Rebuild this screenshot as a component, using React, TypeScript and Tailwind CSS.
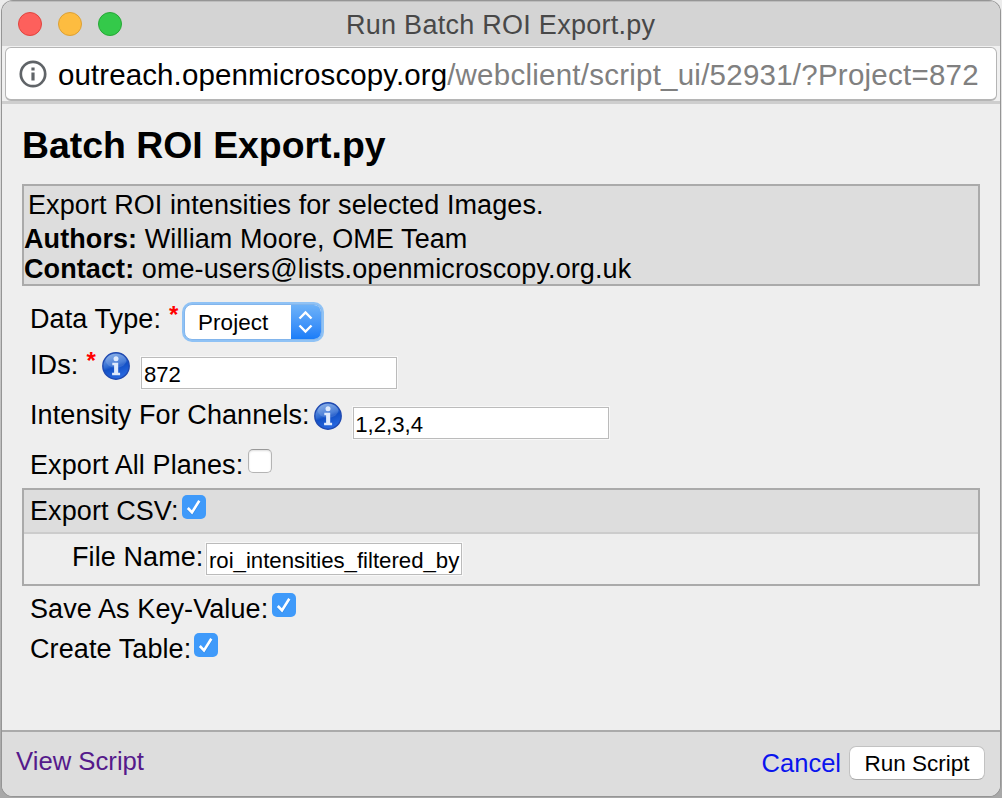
import React from "react";

function InfoIcon({ id, className }: { id: string; className: string }) {
  return (
    <svg viewBox="0 0 28 28" className={`h-7 w-7 shrink-0 ${className}`}>
      <defs>
        <linearGradient id={id} x1="0.25" y1="0" x2="0.6" y2="1">
          <stop offset="0" stopColor="#7fa9e6" />
          <stop offset="0.45" stopColor="#2f6bd2" />
          <stop offset="0.55" stopColor="#1250c6" />
          <stop offset="1" stopColor="#2b6be2" />
        </linearGradient>
      </defs>
      <circle cx="14" cy="14" r="13.2" fill={`url(#${id})`} stroke="#1f49b0" strokeWidth="1.4" />
      <ellipse cx="14" cy="8.8" rx="10.3" ry="7" fill="#ffffff" opacity="0.14" />
      <circle cx="14" cy="6.8" r="2.5" fill="#dfeafc" />
      <path d="M10.3 10.8h5.9v10h1.9v2.5h-8v-2.5h2v-7.5h-1.8z" fill="#dfeafc" />
    </svg>
  );
}

function Checkbox({ checked = false, className }: { checked?: boolean; className: string }) {
  if (!checked) {
    return (
      <span
        className={`block h-6 w-6 shrink-0 rounded-[5px] border border-[#b4b4b4] border-t-[#999] bg-white shadow-[inset_0_1px_2px_#ddd] ${className}`}
      />
    );
  }
  return (
    <span className={`block h-6 w-6 shrink-0 rounded-[5px] bg-[#3f9afa] ${className}`}>
      <svg viewBox="0 0 24 24" className="h-6 w-6" fill="none">
        <path d="M6 14.1l4.3 4.2L17.3 6.6" stroke="#2278d8" strokeWidth="2.6" opacity="0.5" />
        <path d="M5.8 13l4.2 4.4L17.3 5.8" stroke="#fff" strokeWidth="2.6" />
      </svg>
    </span>
  );
}

function TextBox({ value, className }: { value: string; className: string }) {
  return (
    <div
      className={`h-8 w-64 shrink-0 border border-[#bbb] bg-white pl-[1.5px] text-[22.2px] leading-[33px] tracking-normal whitespace-nowrap shadow-[0_0_0_1px_#f8f8f8] ${className}`}
    >
      {value}
    </div>
  );
}

function Required({ className }: { className: string }) {
  return <span className={`-mt-[3px] w-[11px] text-[24px] font-bold leading-[28px] tracking-normal text-[#f00] ${className}`}>*</span>;
}

export default function App() {
  return (
    <div className="h-[798px] w-[1002px] overflow-hidden bg-gradient-to-b from-[#ececec] via-[#c2c2c2] to-[#a8a8a8] px-[2px] pt-px font-['Liberation_Sans',Arial,sans-serif] text-[27px] leading-[30px] tracking-[0.09px] text-black">
      <div className="flex h-[795px] w-[998px] flex-col overflow-hidden rounded-[11px] bg-[#eeeeee] shadow-[0_0_0_1px_#959595]">
        <header className="flex h-[45px] shrink-0 items-start border-t border-[#bdbdbd] bg-[#d4d4d4]">
          <div className="flex gap-4 pl-4 pt-[10px]">
            <span className="h-6 w-6 rounded-full border border-[#e0443e] bg-[#fd605c]" />
            <span className="h-6 w-6 rounded-full border border-[#dca035] bg-[#fdbc40]" />
            <span className="h-6 w-6 rounded-full border border-[#27a736] bg-[#34c94a]" />
          </div>
          <h2 className="ml-[224px] mt-[8px] whitespace-nowrap tracking-[0.27px] text-[#484848]">Run Batch ROI Export.py</h2>
        </header>

        <div className="flex h-[58px] shrink-0 flex-col border-b-[3px] border-[#cecece] bg-[#f0f0f0] px-[3px] pt-px">
          <div className="flex h-[54px] items-start rounded-[6px] border border-b-2 border-[#b5b5b5] bg-white pl-[13px]">
            <svg viewBox="0 0 28 28" className="mt-[12px] h-7 w-7 shrink-0">
              <circle cx="14" cy="14" r="12.2" fill="none" stroke="#606468" strokeWidth="2.7" />
              <path d="M12.4 7.4h3.2v3h-3.2zM12.4 12.600h3.2v8h-3.2z" fill="#606468" />
            </svg>
            <div className="ml-[11px] mt-[11px] whitespace-nowrap text-[29.5px] leading-[32px] tracking-[0.1px]">
              outreach.openmicroscopy.org<span className="tracking-[0.24px] text-[#808080]">/webclient/script_ui/52931/?Project=872</span>
            </div>
          </div>
        </div>

        <main className="flex flex-1 flex-col px-5">
          <h1 className="mt-[20px] h-[60px] whitespace-nowrap text-[37.4px] font-bold leading-[42px] tracking-normal">Batch ROI Export.py</h1>

          <section className="h-[102px] shrink-0 border-2 border-[#aaa] bg-[#ddd] pt-1">
            <p className="mb-1 pl-1">Export ROI intensities for selected Images.</p>
            <p><b>Authors:</b> William Moore, OME Team</p>
            <p><b>Contact:</b> ome-users@lists.openmicroscopy.org.uk</p>
          </section>

          <div className="flex h-[46px] shrink-0 items-start pl-2 pt-[18px] whitespace-nowrap">
            <span>Data Type:</span>
            <Required className="ml-[8px]" />
            <div className="ml-[4px] flex h-[36px] w-[138px] shrink-0 overflow-hidden rounded-[8px] border border-[#82b5ec] bg-white text-[22.4px] leading-[35px] tracking-[0.1px] shadow-[0_0_0_2px_#8fc2f5]">
              <span className="flex-1 pl-[13px]">Project</span>
              <span className="w-[30px] bg-gradient-to-b from-[#6db2f8] to-[#1a7df8]">
                <svg viewBox="0 0 30 34" className="h-[34px] w-[30px]" fill="none" stroke="#fff" strokeWidth="2.4">
                  <path d="M8.5 13.5L14.500 7.5l6 6M8.5 20.5l6 6 6-6" />
                </svg>
              </span>
            </div>
          </div>

          <div className="flex h-[50px] shrink-0 items-start pl-2 pt-[18px] whitespace-nowrap">
            <span>IDs:</span>
            <Required className="ml-[8px]" />
            <InfoIcon id="idsInfo" className="ml-[5px] mt-[2px]" />
            <TextBox value="872" className="ml-[11px] mt-[7px]" />
          </div>

          <div className="flex h-[50px] shrink-0 items-start pl-2 pt-[18px] whitespace-nowrap">
            <span>Intensity For Channels:</span>
            <InfoIcon id="channelsInfo" className="ml-[4px] mt-[2px]" />
            <TextBox value="1,2,3,4" className="ml-[11px] mt-[7px]" />
          </div>

          <div className="flex h-[56px] shrink-0 items-start pl-2 pt-[18px] whitespace-nowrap">
            <span>Export All Planes:</span>
            <Checkbox className="ml-[5px] -mt-px" />
          </div>

          <section className="h-[98px] shrink-0 border-2 border-[#aaa] whitespace-nowrap">
            <div className="flex h-[44px] items-start border-b-2 border-[#ccc] bg-[#ddd] pl-[6px] pt-[6px]">
              <span>Export CSV:</span>
              <Checkbox checked className="ml-[3px] -mt-px" />
            </div>
            <div className="flex items-start pl-[48px] pt-[8px]">
              <span>File Name:</span>
              <TextBox value="roi_intensities_filtered_by" className="ml-[3px] mt-px" />
            </div>
          </section>

          <div className="flex h-[40px] shrink-0 items-start pl-2 pt-[8px] whitespace-nowrap">
            <span>Save As Key-Value:</span>
            <Checkbox checked className="ml-[4px] -mt-px" />
          </div>
          <div className="flex h-[40px] shrink-0 items-start pl-2 pt-[8px] whitespace-nowrap">
            <span>Create Table:</span>
            <Checkbox checked className="ml-[3px] -mt-px" />
          </div>
        </main>

        <footer className="flex h-[66px] shrink-0 items-start border-t-2 border-[#aaa] bg-[#ddd] pl-[14px] text-[25.7px] tracking-normal whitespace-nowrap">
          <a className="mt-[14px] text-[#551a8b]">View Script</a>
          <div className="ml-auto flex items-start pr-[15px] pt-[14px]">
            <a className="mt-[2px] text-[25.5px] text-[#0a14ee]">Cancel</a>
            <button className="ml-[8px] h-[34px] w-[136px] rounded-[7px] border border-[#c2c2c2] border-b-[#aaa] bg-white text-[22.5px] leading-[34px]">Run Script</button>
          </div>
        </footer>
      </div>
    </div>
  );
}
